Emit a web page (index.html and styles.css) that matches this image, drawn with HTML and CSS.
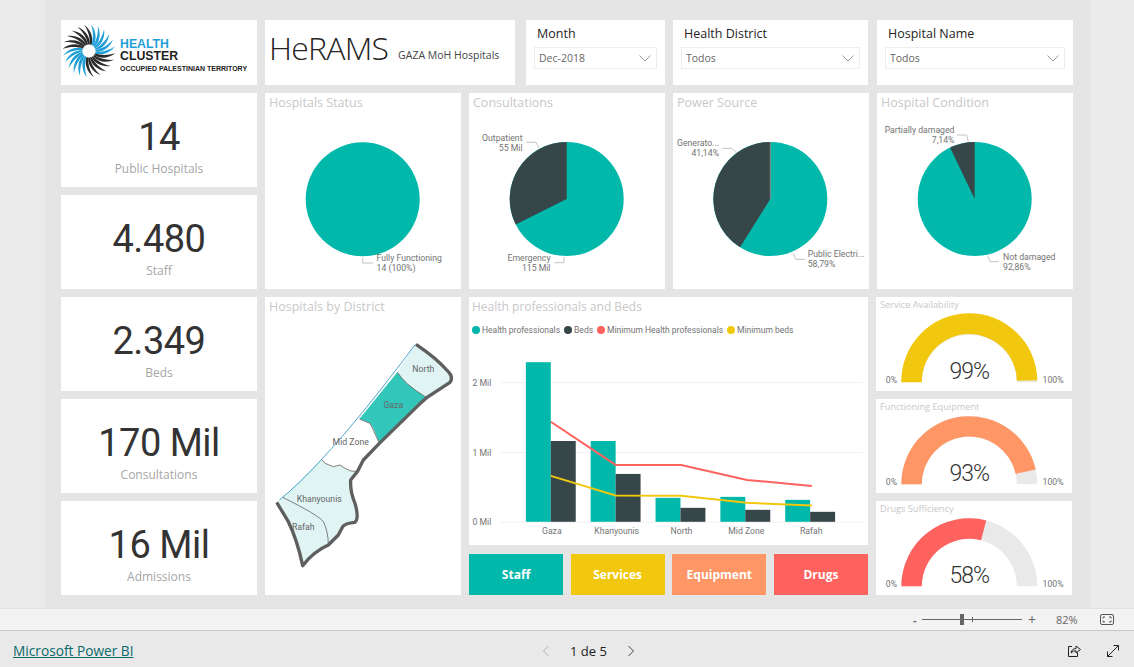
FILE: index.html
```html
<!DOCTYPE html>
<html lang="en">
<head>
<meta charset="utf-8">
<title>HeRAMS Gaza MoH Hospitals</title>
<link rel="stylesheet" href="styles.css">
</head>
<body>
<main class="stage">
  <div class="canvas">
    <header class="top-row">
      <div class="card logo">
        <svg class="swirl" width="52" height="52" viewBox="-26 -26 52 52" aria-hidden="true">
          <defs><path id="arm" d="M6.500 -.8C12 -2 19 -5.500 24 -11.500C21 -3.500 13.500 1.500 6.500 .8Z"/></defs>
          <use href="#arm" class="sw-b" transform="rotate(0)"/>
          <use href="#arm" class="sw-b" transform="rotate(15)"/>
          <use href="#arm" class="sw-k" transform="rotate(30)"/>
          <use href="#arm" class="sw-k" transform="rotate(45)"/>
          <use href="#arm" class="sw-k" transform="rotate(60)"/>
          <use href="#arm" class="sw-k" transform="rotate(75)"/>
          <use href="#arm" class="sw-k" transform="rotate(90)"/>
          <use href="#arm" class="sw-k" transform="rotate(105)"/>
          <use href="#arm" class="sw-b" transform="rotate(120)"/>
          <use href="#arm" class="sw-b" transform="rotate(135)"/>
          <use href="#arm" class="sw-b" transform="rotate(150)"/>
          <use href="#arm" class="sw-b" transform="rotate(165)"/>
          <use href="#arm" class="sw-b" transform="rotate(180)"/>
          <use href="#arm" class="sw-b" transform="rotate(195)"/>
          <use href="#arm" class="sw-k" transform="rotate(210)"/>
          <use href="#arm" class="sw-k" transform="rotate(225)"/>
          <use href="#arm" class="sw-k" transform="rotate(240)"/>
          <use href="#arm" class="sw-k" transform="rotate(255)"/>
          <use href="#arm" class="sw-k" transform="rotate(270)"/>
          <use href="#arm" class="sw-k" transform="rotate(285)"/>
          <use href="#arm" class="sw-b" transform="rotate(300)"/>
          <use href="#arm" class="sw-b" transform="rotate(315)"/>
          <use href="#arm" class="sw-b" transform="rotate(330)"/>
          <use href="#arm" class="sw-b" transform="rotate(345)"/>
        </svg>
        <div class="logo-text">
          <span class="logo-health">HEALTH</span>
          <span class="logo-cluster">CLUSTER</span>
          <span class="logo-opt">OCCUPIED PALESTINIAN TERRITORY</span>
        </div>
      </div>
      <div class="card title-card">
        <h1 class="brand">HeRAMS</h1>
        <span class="brand-sub">GAZA MoH Hospitals</span>
      </div>
      <div class="card slicer slicer-month">
        <div class="slicer-label">Month</div>
        <div class="slicer-box"><span>Dec-2018</span><svg width="12" height="7" viewBox="0 0 12 7"><path d="M.5.5 6 6 11.500.5" class="chev"/></svg></div>
      </div>
      <div class="card slicer slicer-district">
        <div class="slicer-label">Health District</div>
        <div class="slicer-box"><span>Todos</span><svg width="12" height="7" viewBox="0 0 12 7"><path d="M.5.5 6 6 11.500.5" class="chev"/></svg></div>
      </div>
      <div class="card slicer slicer-hospital">
        <div class="slicer-label">Hospital Name</div>
        <div class="slicer-box"><span>Todos</span><svg width="12" height="7" viewBox="0 0 12 7"><path d="M.5.5 6 6 11.500.5" class="chev"/></svg></div>
      </div>
    </header>

    <section class="grid">
      <div class="card kpi k1"><div class="kpi-value">14</div><div class="kpi-label">Public Hospitals</div></div>
      <div class="card kpi k2"><div class="kpi-value">4.480</div><div class="kpi-label">Staff</div></div>
      <div class="card kpi k3"><div class="kpi-value">2.349</div><div class="kpi-label">Beds</div></div>
      <div class="card kpi k4"><div class="kpi-value">170 Mil</div><div class="kpi-label">Consultations</div></div>
      <div class="card kpi k5"><div class="kpi-value">16 Mil</div><div class="kpi-label">Admissions</div></div>

      <div class="card pie-card p1">
        <h2 class="visual-title">Hospitals Status</h2>
        <svg class="fill-svg" viewBox="265 111 196 178">
          <circle cx="362.700" cy="199.300" r="57" class="teal"/>
          <path d="M362.700 258V263H373" class="leader"/>
          <text x="376.500" y="261" class="lbl">Fully Functioning</text>
          <text x="376.500" y="271" class="lbl">14 (100%)</text>
        </svg>
      </div>
      <div class="card pie-card p2">
        <h2 class="visual-title">Consultations</h2>
        <svg class="fill-svg" viewBox="469 111 196 178">
          <circle cx="566.700" cy="199" r="57" class="teal"/>
          <path d="M566.700 199V142A57 57 0 0 0 515.700 224.400Z" class="dark"/>
          <path d="M526.700 142.300H536L539 148" class="leader"/>
          <path d="M554.300 262.700H564V256.700" class="leader"/>
          <text x="522.500" y="141" class="lbl end">Outpatient</text>
          <text x="522.500" y="151" class="lbl end">55 Mil</text>
          <text x="550.500" y="261" class="lbl end">Emergency</text>
          <text x="550.500" y="271" class="lbl end">115 Mil</text>
        </svg>
      </div>
      <div class="card pie-card p3">
        <h2 class="visual-title">Power Source</h2>
        <svg class="fill-svg" viewBox="673 111 196 178">
          <circle cx="770.300" cy="199" r="57" class="teal"/>
          <path d="M770.300 199V142A57 57 0 0 0 740.100 247.300Z" class="dark"/>
          <path d="M770.300 142V199" class="sliver"/>
          <path d="M722.300 148.300H731.700L736.700 153" class="leader"/>
          <path d="M793.300 253.300L795.700 259.300H805" class="leader"/>
          <text x="719" y="146" class="lbl end">Generato...</text>
          <text x="719" y="156" class="lbl end">41,14%</text>
          <text x="807.700" y="257" class="lbl">Public Electri...</text>
          <text x="807.700" y="267" class="lbl">58,79%</text>
        </svg>
      </div>
      <div class="card pie-card p4">
        <h2 class="visual-title">Hospital Condition</h2>
        <svg class="fill-svg" viewBox="877 111 196 178">
          <circle cx="974.700" cy="199" r="57" class="teal"/>
          <path d="M974.700 199V142A57 57 0 0 0 950 147.600Z" class="dark"/>
          <path d="M956.700 135H966.700L968.300 141.700" class="leader"/>
          <path d="M987.700 255.700L990 261.700H999" class="leader"/>
          <text x="954.500" y="133" class="lbl end">Partially damaged</text>
          <text x="954.500" y="143" class="lbl end">7,14%</text>
          <text x="1003" y="259.500" class="lbl">Not damaged</text>
          <text x="1003" y="269.500" class="lbl">92,86%</text>
        </svg>
      </div>

      <div class="card map-card">
        <h2 class="visual-title">Hospitals by District</h2>
        <svg class="fill-svg" viewBox="265 315 196 280">
          <g transform="translate(260 295) scale(.33333)">
            <path class="m-light" d="M466 148Q530 190 560 225Q580 245 570 262L500 308Q470 290 440 265Q425 250 412 232Z"/>
            <path class="m-teal" d="M412 232Q425 250 440 265Q470 290 500 308L478 328L358 445L340 400L330 385L298 372Z"/>
            <path class="m-white" d="M298 372L330 385L340 405L358 445L310 495L292 530Q270 530 255 520L240 510L220 515L195 505L185 493Z"/>
            <path class="m-light" d="M185 493L195 505L220 515L240 510L255 520Q270 530 292 530L272 555Q270 590 285 625Q298 670 285 682Q255 685 248 695L235 720L205 750Q205 710 190 680Q175 660 68 607Z"/>
            <path class="m-light" d="M68 607Q175 660 190 680Q205 710 205 750Q160 770 128 812Q112 735 85 680L50 622Z"/>
            <path class="m-inner" d="M412 232Q425 250 440 265Q470 290 500 308"/>
            <path class="m-inner" d="M298 372L330 385L340 405L358 445"/>
            <path class="m-inner" d="M185 493L195 505L220 515L240 510L255 520Q270 530 292 530"/>
            <path class="m-inner" d="M68 607Q175 660 190 680Q205 710 205 750"/>
            <path class="m-coast" d="M466 148Q300 370 185 493Q120 565 58 615"/>
            <path class="m-border" d="M468 148Q530 190 560 225Q582 245 570 262L500 308L478 328L358 445L310 495L292 530L272 555Q270 590 285 625Q298 670 285 682Q255 685 248 695L235 720L205 750Q160 770 128 812Q112 735 85 680L50 622"/>
          </g>
          <text x="423.300" y="372" class="map-lbl mid">North</text>
          <text x="393.300" y="408" class="map-lbl mid">Gaza</text>
          <text x="350.700" y="445" class="map-lbl mid">Mid Zone</text>
          <text x="319.300" y="502" class="map-lbl mid">Khanyounis</text>
          <text x="303.300" y="530" class="map-lbl mid">Rafah</text>
        </svg>
      </div>

      <div class="chart-col">
        <div class="card chart-card">
          <h2 class="visual-title">Health professionals and Beds</h2>
          <ul class="legend">
            <li><i class="dot bg-teal"></i>Health professionals</li>
            <li><i class="dot bg-dark"></i>Beds</li>
            <li><i class="dot bg-red"></i>Minimum Health professionals</li>
            <li><i class="dot bg-yellow"></i>Minimum beds</li>
          </ul>
          <svg class="fill-svg" viewBox="469 338 400 207">
            <path d="M500 382.500H864M500 452.500H864M500 522.500H864" class="gridline"/>
            <g class="axis">
              <text x="472.500" y="386">2 Mil</text>
              <text x="472.500" y="456">1 Mil</text>
              <text x="472.500" y="525.500">0 Mil</text>
            </g>
            <g class="axis mid">
              <text x="552" y="534">Gaza</text>
              <text x="617" y="534">Khanyounis</text>
              <text x="682" y="534">North</text>
              <text x="747" y="534">Mid Zone</text>
              <text x="812" y="534">Rafah</text>
            </g>
            <rect x="526" y="362" width="25" height="160" class="teal"/>
            <rect x="551" y="441" width="25" height="81" class="dark"/>
            <rect x="591" y="441" width="25" height="81" class="teal"/>
            <rect x="616" y="474" width="25" height="48" class="dark"/>
            <rect x="656" y="498" width="25" height="24" class="teal"/>
            <rect x="681" y="508" width="25" height="14" class="dark"/>
            <rect x="721" y="497" width="25" height="25" class="teal"/>
            <rect x="746" y="510" width="25" height="12" class="dark"/>
            <rect x="786" y="500" width="25" height="22" class="teal"/>
            <rect x="811" y="512" width="25" height="10" class="dark"/>
            <polyline points="551,421.700 616,465 681.700,465 747.700,480 812.700,486" class="line-red"/>
            <polyline points="551,476 616,495.700 681.700,496 747.700,503 812.700,505.700" class="line-yellow"/>
          </svg>
        </div>
        <nav class="buttons">
          <a class="btn bg-teal">Staff</a>
          <a class="btn bg-yellow">Services</a>
          <a class="btn bg-orange">Equipment</a>
          <a class="btn bg-red">Drugs</a>
        </nav>
      </div>

      <div class="card gauge-card g1">
        <h3 class="gauge-title">Service Availability</h3>
        <svg class="fill-svg" viewBox="876 313 196 78">
          <path class="track" d="M901.300 382.300A68 68 0 0 1 1037.300 382.300H1016.800A47.500 47.500 0 0 0 921.800 382.300Z"/>
          <path class="yellow" d="M901.300 382.300A68 68 0 0 1 1037.300 380.200L1016.800 380.800A47.500 47.500 0 0 0 921.800 382.300Z"/>
          <text x="969.300" y="378.500" class="gauge-val">99%</text>
          <text x="897" y="383" class="axis end">0%</text>
          <text x="1042.500" y="383" class="axis">100%</text>
        </svg>
      </div>
      <div class="card gauge-card g2">
        <h3 class="gauge-title">Functioning Equipment</h3>
        <svg class="fill-svg" viewBox="876 415 196 78">
          <path class="track" d="M901.300 484.300A68 68 0 0 1 1037.300 484.300H1016.800A47.500 47.500 0 0 0 921.800 484.300Z"/>
          <path class="orange" d="M901.300 484.300A68 68 0 0 1 1035.700 469.500L1015.700 473.900A47.500 47.500 0 0 0 921.800 484.300Z"/>
          <text x="969.300" y="480.500" class="gauge-val">93%</text>
          <text x="897" y="485" class="axis end">0%</text>
          <text x="1042.500" y="485" class="axis">100%</text>
        </svg>
      </div>
      <div class="card gauge-card g3">
        <h3 class="gauge-title">Drugs Sufficiency</h3>
        <svg class="fill-svg" viewBox="876 517 196 78">
          <path class="track" d="M901.300 586.300A68 68 0 0 1 1037.300 586.300H1016.800A47.500 47.500 0 0 0 921.800 586.300Z"/>
          <path class="red" d="M901.300 586.300A68 68 0 0 1 986.200 520.400L981.100 540.300A47.500 47.500 0 0 0 921.800 586.300Z"/>
          <text x="969.300" y="582.500" class="gauge-val">58%</text>
          <text x="897" y="587" class="axis end">0%</text>
          <text x="1042.500" y="587" class="axis">100%</text>
        </svg>
      </div>
    </section>
  </div>
</main>

<div class="toolbar">
  <span class="zoom-minus">-</span>
  <div class="slider"><i class="slider-tick"></i><i class="slider-thumb"></i></div>
  <span class="zoom-plus">+</span>
  <span class="zoom-pct">82%</span>
  <svg class="fit-icon" width="14" height="11" viewBox="0 0 14 11"><rect x=".5" y=".5" width="13" height="10" rx="1.500" class="ico"/><path d="M3 4.500V3H5M9 3H11V4.500M11 6.500V8H9M5 8H3V6.500" class="ico"/></svg>
</div>

<footer class="footer">
  <a class="pbi-link" href="#">Microsoft Power BI</a>
  <div class="pager">
    <svg width="8" height="12" viewBox="0 0 8 12"><path d="M6.500 1 1.500 6 6.500 11" class="pg-off"/></svg>
    <span class="pg-text">1 de 5</span>
    <svg width="8" height="12" viewBox="0 0 8 12"><path d="M1.500 1 6.500 6 1.500 11" class="pg-on"/></svg>
  </div>
  <div class="foot-icons">
    <svg width="14" height="14" viewBox="0 0 14 14"><path d="M5 2.500H1.500V12.500H10.500V8.500" class="ico-dk"/><path d="M4 9Q5 4.500 9 4.500V2L13.500 5.500 9 9V6.800Q6 6.500 4 9Z" class="ico-dk"/></svg>
    <svg width="14" height="14" viewBox="0 0 14 14"><path d="M1.500 12.500 12.500 1.500M7.500 1.500H12.500V6.500M1.500 7.500V12.500H6.500" class="ico-dk"/></svg>
  </div>
</footer>
</body>
</html>
```
FILE: styles.css
```css
* { box-sizing: border-box; }
html, body { margin: 0; height: 100%; }
body {
  width: 1134px;
  height: 667px;
  overflow: hidden;
  display: flex;
  flex-direction: column;
  background: #eaeaea;
  font-family: "Open Sans", "Liberation Sans", sans-serif;
}
h1, h2, h3, ul { margin: 0; padding: 0; font-weight: 400; }

.stage { height: 608px; background: #ebebeb; padding: 0 44px 0 45px; flex: none; }
.canvas { height: 100%; background: #e5e5e5; padding: 20px 0 0 16px; }
.card { background: #fff; }

.top-row { display: flex; height: 65px; }
.logo { width: 196px; margin-right: 8px; display: flex; align-items: center; padding-left: 2px; }
.swirl { flex: none; margin-bottom: 3px; }
.sw-b { fill: #1f9fd6; }
.sw-k { fill: #2b2b2b; }
.logo-text { display: flex; flex-direction: column; margin-left: 5px; font-family: "Liberation Sans", sans-serif; font-weight: 700; margin-top: 7px; }
.logo-health { color: #1fa0d8; font-size: 12.300px; line-height: 12px; }
.logo-cluster { color: #222; font-size: 12.300px; line-height: 13px; }
.logo-opt { color: #222; font-size: 7px; line-height: 11px; white-space: nowrap; }

.title-card { width: 250px; margin-right: 11px; display: flex; align-items: center; padding: 0 0 10px 4px; }
.brand { font-size: 32px; font-weight: 300; color: #252423; line-height: 1; letter-spacing: -.8px; }
.brand-sub { font-size: 10.500px; color: #444; margin: 15px 0 0 10px; white-space: nowrap; }

.slicer { padding: 5px 8px 0; }
.slicer-month { width: 139px; margin-right: 8px; }
.slicer-district { width: 195px; margin-right: 9px; }
.slicer-hospital { width: 196px; }
.slicer-label { font-size: 12.500px; line-height: 17px; color: #252423; padding-left: 3px; margin-bottom: 5px; }
.slicer-box { height: 22px; border: 1px solid #eee; display: flex; align-items: center; justify-content: space-between; padding: 0 5px 0 4px; font-size: 10.500px; color: #666; }
.chev { fill: none; stroke: #999; stroke-width: 1; }

.grid {
  display: grid;
  grid-template-columns: repeat(5, 196px);
  grid-template-rows: repeat(5, 94px);
  gap: 8px;
  margin-top: 8px;
}
.k1 { grid-area: 1 / 1; } .k2 { grid-area: 2 / 1; } .k3 { grid-area: 3 / 1; } .k4 { grid-area: 4 / 1; } .k5 { grid-area: 5 / 1; }
.p1 { grid-area: 1 / 2 / 3 / 3; } .p2 { grid-area: 1 / 3 / 3 / 4; } .p3 { grid-area: 1 / 4 / 3 / 5; } .p4 { grid-area: 1 / 5 / 3 / 6; }
.map-card { grid-area: 3 / 2 / 6 / 3; }
.chart-col { grid-area: 3 / 3 / 6 / 5; display: flex; flex-direction: column; }
.g1 { grid-area: 3 / 5; } .g2 { grid-area: 4 / 5; } .g3 { grid-area: 5 / 5; }

.kpi { display: flex; flex-direction: column; align-items: center; padding-top: 21px; }
.kpi-value { font-family: "Roboto", sans-serif; font-size: 38px; line-height: 46px; color: #333; letter-spacing: -.5px; white-space: nowrap; }
.kpi-label { font-size: 12px; line-height: 17px; color: #a6a6a6; }

.pie-card, .map-card, .chart-card, .gauge-card { display: flex; flex-direction: column; }
.visual-title { font-size: 12.500px; line-height: 20px; height: 18px; padding-left: 4px; color: #c8c8c8; white-space: nowrap; }
.chart-card .visual-title { font-size: 12px; padding-left: 3px; }
.fill-svg { display: block; width: 100%; flex: 1; min-height: 0; }

.teal { fill: #01b8aa; } .dark { fill: #374649; } .yellow { fill: #f2c80f; } .orange { fill: #fe9666; } .red { fill: #fd625e; }
.bg-teal { background: #01b8aa; } .bg-dark { background: #374649; } .bg-yellow { background: #f2c80f; } .bg-orange { background: #fe9666; } .bg-red { background: #fd625e; }
.track { fill: #e9e9e9; }
.sliver { stroke: #8a8a8a; stroke-width: 1; fill: none; }
.leader { fill: none; stroke: #c4c4c4; stroke-width: 1; }
.lbl, .axis, .map-lbl { font-family: "Roboto", sans-serif; font-size: 8.700px; fill: #737373; }
.end { text-anchor: end; }
.mid { text-anchor: middle; }

.m-light { fill: #dff4f3; }
.m-teal { fill: #33c6bb; }
.m-white { fill: #fff; }
.m-inner { fill: none; stroke: #666; stroke-width: 2.500; }
.m-coast { fill: none; stroke: #2a93c4; stroke-width: 2.500; }
.m-border { fill: none; stroke: #5f5f5f; stroke-width: 10; stroke-linejoin: round; }
.map-lbl { fill: #666; }

.chart-card { height: 248px; width: 399px; }
.legend { list-style: none; display: flex; height: 16px; margin-top: 7px; padding-left: 3px; gap: 4px; font-family: "Roboto", sans-serif; font-size: 8.500px; line-height: 16px; color: #737373; white-space: nowrap; }
.legend li { display: flex; align-items: center; }
.dot { width: 8px; height: 8px; border-radius: 50%; margin-right: 2px; }
.gridline { stroke: #f1f1f1; stroke-width: 1; fill: none; }
.line-red { fill: none; stroke: #fd625e; stroke-width: 2; }
.line-yellow { fill: none; stroke: #f2c80f; stroke-width: 2; }

.buttons { display: flex; width: 399px; margin-top: 9px; height: 41px; justify-content: space-between; }
.btn { width: 94px; display: flex; align-items: center; justify-content: center; color: #fff; font-weight: 700; font-size: 12px; }

.gauge-card { margin: 0 1px 0 -1px; }
.gauge-title { font-size: 9.200px; line-height: 16px; height: 16px; padding-left: 4px; color: #c8c8c8; white-space: nowrap; }
.gauge-val { font-family: "Roboto", sans-serif; font-size: 23px; font-weight: 300; fill: #333; text-anchor: middle; letter-spacing: -1px; }

.toolbar {
  flex: none; height: 23px; background: #f3f3f3;
  border-top: 1px solid #e2e2e2; border-bottom: 1px solid #c8c8c8;
  display: flex; align-items: center; padding-left: 913px;
  font-size: 11px; color: #666;
}
.zoom-minus { width: 9px; font-weight: 700; }
.slider { position: relative; width: 100px; height: 1px; background: #666; }
.slider-thumb { position: absolute; left: 38px; top: -5px; width: 4px; height: 11px; background: #666; }
.slider-tick { position: absolute; left: 50px; top: -2px; width: 1px; height: 5px; background: #666; }
.zoom-plus { width: 12px; margin-left: 6px; font-size: 14px; }
.zoom-pct { margin-left: 16px; width: 36px; }
.fit-icon { margin-left: 8px; }
.ico { fill: none; stroke: #555; stroke-width: 1; }

.footer { flex: 1; position: relative; display: flex; align-items: center; background: #e9e9e9; padding: 3px 0 0 13px; }
.pbi-link { font-size: 13.700px; color: #0b6a6a; text-decoration: underline; width: 529px; white-space: nowrap; }
.pager { display: flex; align-items: center; justify-content: space-between; width: 93px; }
.pg-text { font-size: 13px; color: #222; font-weight: 500; }
.pg-off { fill: none; stroke: #b3b3b3; stroke-width: 1; }
.pg-on { fill: none; stroke: #444; stroke-width: 1; }
.foot-icons { display: flex; gap: 25px; margin-left: 432px; }
.ico-dk { fill: none; stroke: #222; stroke-width: 1; }
```
